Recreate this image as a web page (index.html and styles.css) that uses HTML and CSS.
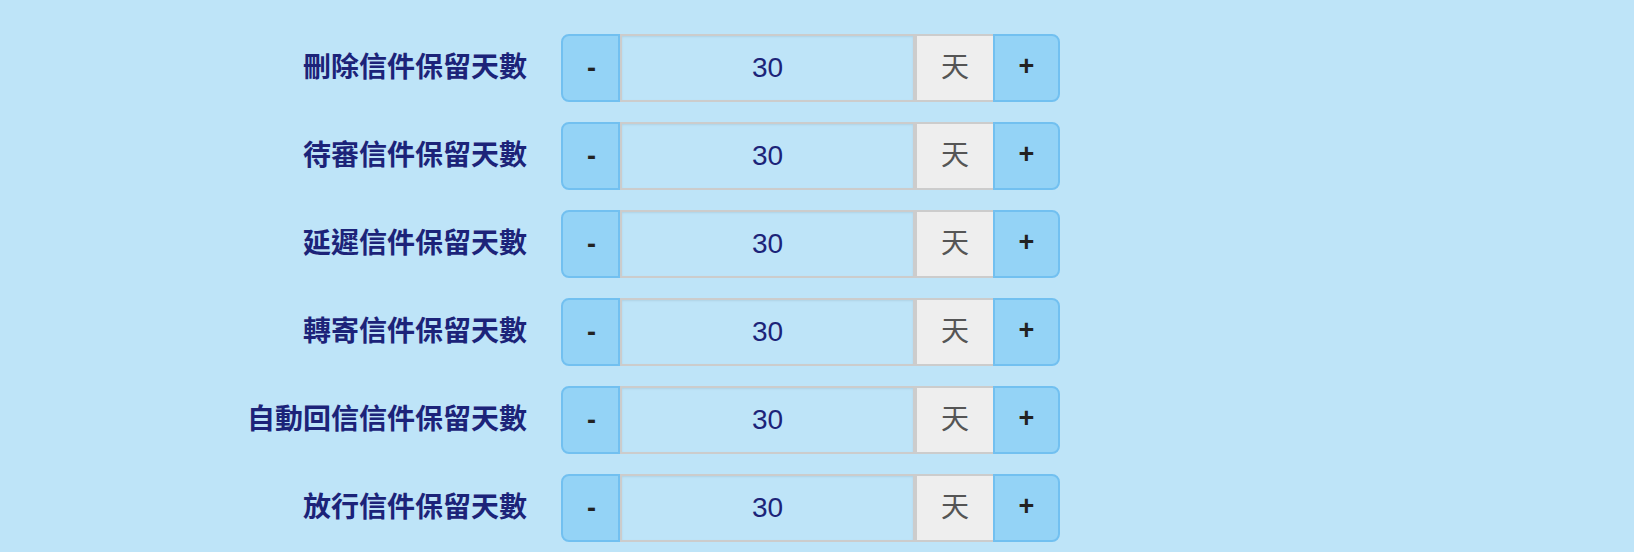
FILE: index.html
```html
<!DOCTYPE html>
<html lang="zh-Hant">
<head>
    <meta charset="UTF-8">
    <meta name="viewport" content="width=device-width, initial-scale=1.0">
    <title>信件保留天數</title>
    <link rel="stylesheet" href="styles.css">
</head>
<body>
    <form class="settings">
        <label class="field-label" for="delDays">刪除信件保留天數</label>
        <div class="stepper">
            <button type="button" class="step minus">-</button>
            <input type="text" id="delDays" class="days" value="30">
            <span class="unit">天</span>
            <button type="button" class="step plus">+</button>
        </div>

        <label class="field-label" for="pendingDays">待審信件保留天數</label>
        <div class="stepper">
            <button type="button" class="step minus">-</button>
            <input type="text" id="pendingDays" class="days" value="30">
            <span class="unit">天</span>
            <button type="button" class="step plus">+</button>
        </div>

        <label class="field-label" for="delayDays">延遲信件保留天數</label>
        <div class="stepper">
            <button type="button" class="step minus">-</button>
            <input type="text" id="delayDays" class="days" value="30">
            <span class="unit">天</span>
            <button type="button" class="step plus">+</button>
        </div>

        <label class="field-label" for="forwardDays">轉寄信件保留天數</label>
        <div class="stepper">
            <button type="button" class="step minus">-</button>
            <input type="text" id="forwardDays" class="days" value="30">
            <span class="unit">天</span>
            <button type="button" class="step plus">+</button>
        </div>

        <label class="field-label" for="replyDays">自動回信信件保留天數</label>
        <div class="stepper">
            <button type="button" class="step minus">-</button>
            <input type="text" id="replyDays" class="days" value="30">
            <span class="unit">天</span>
            <button type="button" class="step plus">+</button>
        </div>

        <label class="field-label" for="releaseDays">放行信件保留天數</label>
        <div class="stepper">
            <button type="button" class="step minus">-</button>
            <input type="text" id="releaseDays" class="days" value="30">
            <span class="unit">天</span>
            <button type="button" class="step plus">+</button>
        </div>
    </form>
</body>
</html>
```

FILE: styles.css
```css
body {
    background-color: #bee4f8;
    font-family: "Liberation Sans", "Noto Sans CJK TC", sans-serif;
    margin: 0;
    padding: 0;
}

.settings {
    display: grid;
    grid-template-columns: 527px 499px;
    column-gap: 34px;
    row-gap: 20px;
    padding-top: 34px;
    align-items: center;
}

.field-label {
    text-align: right;
    font-family: "Noto Sans CJK TC", sans-serif;
    font-size: 28px;
    font-weight: bold;
    line-height: 1;
    padding-bottom: 6px;
    color: #1c2379;
}

.stepper {
    display: flex;
    height: 68px;
}

.step {
    background-color: #94d3f6;
    border: 2px solid #72c0f0;
    color: #222;
    font-family: "Liberation Sans", sans-serif;
    font-size: 27px;
    font-weight: bold;
    padding: 0 0 4px;
    cursor: pointer;
}

.minus {
    width: 59px;
    padding: 0 0 0 2px;
    border-radius: 8px 0 0 8px;
}

.plus {
    width: 67px;
    border-radius: 0 8px 8px 0;
}

.days {
    width: 295px;
    box-sizing: border-box;
    background-color: #bee4f8;
    border: 2px solid #cccccc;
    box-shadow: inset 0 1px 2px rgba(0, 0, 0, 0.08);
    color: #1c2379;
    font-family: "Liberation Sans", sans-serif;
    font-size: 28px;
    text-align: center;
    padding: 0;
    margin: 0;
}

.unit {
    width: 76px;
    display: flex;
    justify-content: center;
    align-items: center;
    background-color: #eeeeee;
    border: 2px solid #cccccc;
    border-right: none;
    color: #555;
    font-family: "Noto Sans CJK TC", sans-serif;
    font-size: 28px;
    line-height: 1;
    padding-bottom: 6px;
}
```
